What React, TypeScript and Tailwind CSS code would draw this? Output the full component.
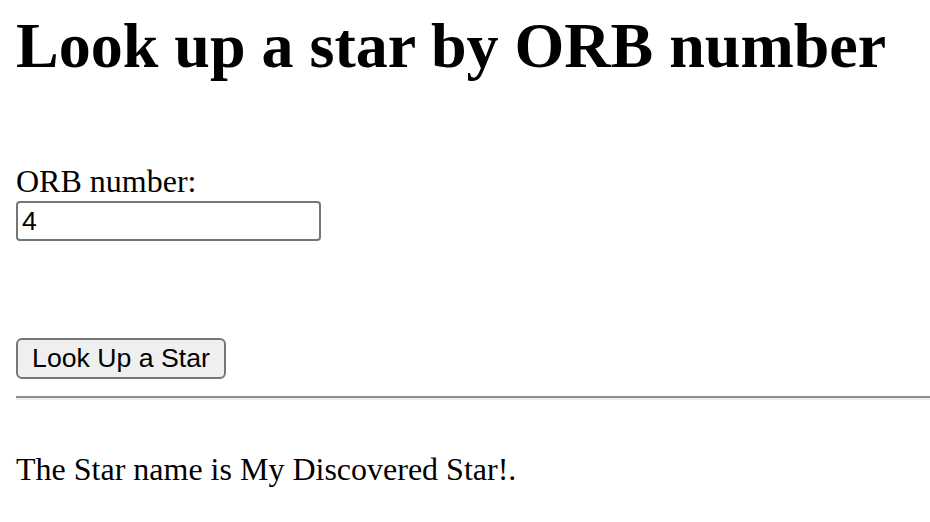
import React, { useState } from 'react';

export default function App() {
    const [orb, setOrb] = useState('4');

    return (
        <div className="min-h-[522px] bg-white pl-[16px] pt-[9px] font-['Liberation_Serif',serif] text-black">
            <h1 className="text-[64px] font-bold leading-[74px]">Look up a star by ORB number</h1>

            <div className="mt-[80px] text-[32px] leading-[37px]">ORB number:</div>
            <input
                type="text"
                value={orb}
                onChange={(e) => setOrb(e.target.value)}
                className="mt-[1px] block h-[40px] w-[305px] rounded-[4px] border-2 border-[#767676] bg-white px-[4px] font-['Liberation_Sans',sans-serif] text-[26.67px] outline-none"
            />

            <button className="mt-[97px] block h-[41px] w-[210px] rounded-[6px] border-2 border-[#767676] bg-[#efefef] font-['Liberation_Sans',sans-serif] text-[26.67px] leading-none">
                Look Up a Star
            </button>

            <hr className="mt-[17px] border-t-2 border-b-2 border-t-[#8f8f8f] border-b-[#eeeeee]" />

            <p className="mt-[51px] text-[32px] leading-[37px]">The Star name is My Discovered Star!.</p>
        </div>
    );
}
